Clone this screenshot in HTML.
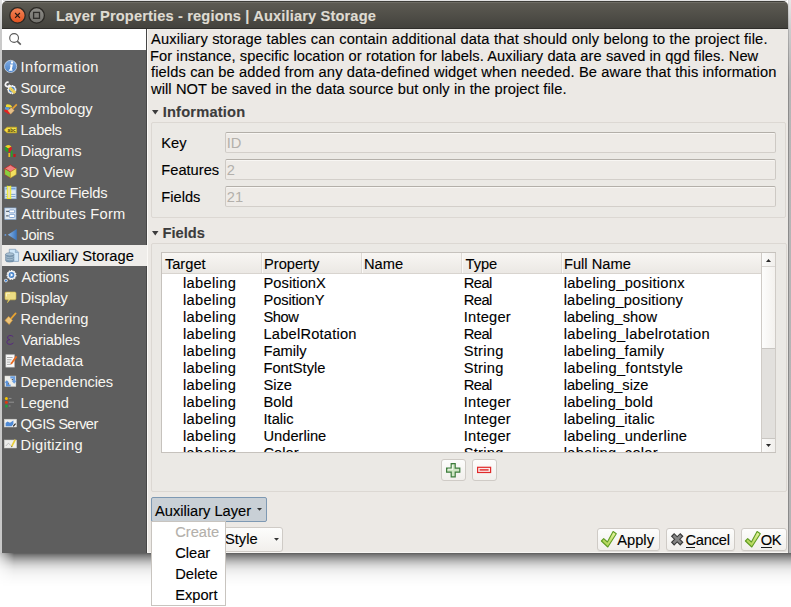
<!DOCTYPE html>
<html><head><meta charset="utf-8"><style>
html,body{margin:0;padding:0;width:791px;height:607px;overflow:hidden;background:#fff;position:relative}
.t{position:absolute;white-space:pre;font-family:"Liberation Sans",sans-serif;-webkit-text-stroke:0.12px currentColor}
.r{position:absolute}
svg.r{overflow:visible}
</style></head><body>
<div class="r" style="left:0;top:553px;width:791px;height:40px;-webkit-mask-image:linear-gradient(90deg,rgba(0,0,0,0.35) 0px,#000 14px);background:linear-gradient(rgba(0,0,0,0.64) 0px,rgba(0,0,0,0.52) 2px,rgba(0,0,0,0.40) 5px,rgba(0,0,0,0.25) 9px,rgba(0,0,0,0.145) 13px,rgba(0,0,0,0.08) 17px,rgba(0,0,0,0.04) 22px,rgba(0,0,0,0.016) 27px,rgba(0,0,0,0) 34px)"></div>
<div class="r" style="left:788px;top:0;width:1px;height:553px;background:linear-gradient(#dcdcdc,#b0b0b0 30px,#8c8c8c 80px,#8a8a8a)"></div>
<div class="r" style="left:789px;top:0;width:2px;height:553px;background:linear-gradient(#e8e8e8,#cccccc 30px,#b6b6b6 80px,#b4b4b4)"></div>
<div class="r" style="left:0;top:0;width:2px;height:553px;background:linear-gradient(#e4e4e4,#cacaca 30px,#c8c8c8)"></div>
<div class="r" style="left:3px;top:0px;width:784px;height:1px;background:#e2e2e2"></div>
<div class="r" style="left:2px;top:1px;width:786px;height:552px;border-radius:5px 5px 0 0;background:#ece9e5"></div>
<div class="r" style="left:147px;top:552px;width:641px;height:1px;background:#f7f5f2"></div>
<div class="r" style="left:2px;top:1px;width:786px;height:28px;border-radius:5px 5px 0 0;background:linear-gradient(#3e3d38 0px,#3e3d38 1px,#6e6c64 1px,#6e6c64 2px,#5c5a52 2px,#43423d 27px)"></div>
<div class="r" style="left:2px;top:28px;width:786px;height:1px;background:#2f2e2b"></div>
<svg class="r" style="left:0;top:0" width="50" height="30"><defs><linearGradient id="gCl" x1="0" y1="0" x2="0" y2="1"><stop offset="0" stop-color="#f3875a"/><stop offset="1" stop-color="#e0501e"/></linearGradient><linearGradient id="gMx" x1="0" y1="0" x2="0" y2="1"><stop offset="0" stop-color="#8f8e89"/><stop offset="1" stop-color="#72716c"/></linearGradient></defs><circle cx="17.5" cy="15.4" r="7.7" fill="url(#gCl)" stroke="#2a2824" stroke-width="1.3"/><path d="M15.1 13L19.9 17.8M19.9 13L15.1 17.8" stroke="#2a1a14" stroke-width="1.2"/><circle cx="36.7" cy="15.4" r="7.7" fill="url(#gMx)" stroke="#2a2824" stroke-width="1.3"/><rect x="33.6" y="12.4" width="5.9" height="5.9" fill="#7e7d78" stroke="#2e2d2a" stroke-width="1.3"/></svg>
<div class="t" style="left:56.00px;top:6.91px;font-size:14.67px;line-height:18px;color:#dfdbd2;font-weight:bold;letter-spacing:0.133px;">Layer Properties - regions | Auxiliary Storage</div>
<div class="r" style="left:2px;top:29px;width:144px;height:524px;background:#5e5e5e"></div>
<div class="r" style="left:146px;top:29px;width:1px;height:524px;background:#474747"></div>
<div class="r" style="left:147px;top:29px;width:1px;height:523px;background:#fbf9f6"></div>
<div class="r" style="left:2px;top:29px;width:144px;height:21px;background:#ffffff"></div>
<svg class="r" style="left:0;top:0" width="30" height="60"><circle cx="14.1" cy="38" r="4.4" fill="none" stroke="#5a5a5a" stroke-width="1.1"/><path d="M17.2 41.2L20.8 44.6" stroke="#5a5a5a" stroke-width="1.6"/></svg>
<div class="t" style="left:20.60px;top:57.91px;font-size:14.67px;line-height:18px;color:#f8f6f2;font-weight:normal;letter-spacing:0.450px;-webkit-text-stroke:0">Information</div>
<div class="t" style="left:20.60px;top:78.91px;font-size:14.67px;line-height:18px;color:#f8f6f2;font-weight:normal;letter-spacing:-0.300px;-webkit-text-stroke:0">Source</div>
<div class="t" style="left:20.60px;top:99.91px;font-size:14.67px;line-height:18px;color:#f8f6f2;font-weight:normal;letter-spacing:-0.062px;-webkit-text-stroke:0">Symbology</div>
<div class="t" style="left:20.60px;top:120.91px;font-size:14.67px;line-height:18px;color:#f8f6f2;font-weight:normal;letter-spacing:-0.380px;-webkit-text-stroke:0">Labels</div>
<div class="t" style="left:20.60px;top:141.91px;font-size:14.67px;line-height:18px;color:#f8f6f2;font-weight:normal;letter-spacing:-0.257px;-webkit-text-stroke:0">Diagrams</div>
<div class="t" style="left:20.60px;top:162.91px;font-size:14.67px;line-height:18px;color:#f8f6f2;font-weight:normal;letter-spacing:-0.150px;-webkit-text-stroke:0">3D View</div>
<div class="t" style="left:20.60px;top:183.91px;font-size:14.67px;line-height:18px;color:#f8f6f2;font-weight:normal;letter-spacing:-0.225px;-webkit-text-stroke:0">Source Fields</div>
<div class="t" style="left:21.60px;top:204.91px;font-size:14.67px;line-height:18px;color:#f8f6f2;font-weight:normal;letter-spacing:0.250px;-webkit-text-stroke:0">Attributes Form</div>
<div class="t" style="left:21.60px;top:225.91px;font-size:14.67px;line-height:18px;color:#f8f6f2;font-weight:normal;letter-spacing:-0.450px;-webkit-text-stroke:0">Joins</div>
<div class="r" style="left:2px;top:245px;width:145px;height:21px;background:#efedea"></div>
<div class="t" style="left:22.40px;top:246.91px;font-size:14.67px;line-height:18px;color:#000;font-weight:normal;letter-spacing:0.044px;">Auxiliary Storage</div>
<div class="t" style="left:21.60px;top:267.91px;font-size:14.67px;line-height:18px;color:#f8f6f2;font-weight:normal;letter-spacing:-0.117px;-webkit-text-stroke:0">Actions</div>
<div class="t" style="left:20.60px;top:288.91px;font-size:14.67px;line-height:18px;color:#f8f6f2;font-weight:normal;letter-spacing:-0.133px;-webkit-text-stroke:0">Display</div>
<div class="t" style="left:20.60px;top:309.91px;font-size:14.67px;line-height:18px;color:#f8f6f2;font-weight:normal;letter-spacing:0.037px;-webkit-text-stroke:0">Rendering</div>
<div class="t" style="left:21.60px;top:330.91px;font-size:14.67px;line-height:18px;color:#f8f6f2;font-weight:normal;letter-spacing:-0.188px;-webkit-text-stroke:0">Variables</div>
<div class="t" style="left:20.60px;top:351.91px;font-size:14.67px;line-height:18px;color:#f8f6f2;font-weight:normal;letter-spacing:0.214px;-webkit-text-stroke:0">Metadata</div>
<div class="t" style="left:20.60px;top:372.91px;font-size:14.67px;line-height:18px;color:#f8f6f2;font-weight:normal;letter-spacing:-0.100px;-webkit-text-stroke:0">Dependencies</div>
<div class="t" style="left:20.60px;top:393.91px;font-size:14.67px;line-height:18px;color:#f8f6f2;font-weight:normal;letter-spacing:-0.100px;-webkit-text-stroke:0">Legend</div>
<div class="t" style="left:20.60px;top:414.91px;font-size:14.67px;line-height:18px;color:#f8f6f2;font-weight:normal;letter-spacing:-0.620px;-webkit-text-stroke:0">QGIS Server</div>
<div class="t" style="left:20.60px;top:435.91px;font-size:14.67px;line-height:18px;color:#f8f6f2;font-weight:normal;letter-spacing:0.278px;-webkit-text-stroke:0">Digitizing</div>
<svg class="r" style="left:0;top:0" width="150" height="460" viewBox="0 0 150 460">
<defs>
<linearGradient id="gI" x1="0" y1="0" x2="0" y2="1"><stop offset="0" stop-color="#7eaae2"/><stop offset="1" stop-color="#4a82c8"/></linearGradient>
<linearGradient id="gChk" x1="0" y1="0" x2="1" y2="1"><stop offset="0" stop-color="#d8ec8a"/><stop offset="1" stop-color="#7fb52e"/></linearGradient>
</defs>
<!-- Information -->
<circle cx="10.6" cy="66.4" r="6.1" fill="url(#gI)" stroke="#c9d8ea" stroke-width="0.8"/>
<path d="M10.1 64.5L12.9 64.5L11.8 69.6L12.7 69.6L12.4 70.7L8.7 70.7L9.0 69.6L9.8 69.6L10.6 65.5L9.9 65.5Z" fill="#fff"/>
<circle cx="12.0" cy="62.5" r="1.15" fill="#fff"/>
<!-- Source: wrench + gear -->
<path d="M8.6 82.6A2.1 2.1 0 1 0 9.3 85.6L10.6 86.9" fill="none" stroke="#f4f4f4" stroke-width="1.7"/>
<circle cx="11.8" cy="89.6" r="4.0" fill="#f6f6f6" stroke="#f0f0f0" stroke-width="1.2" stroke-dasharray="1.4 0.9"/>
<circle cx="11.8" cy="89.6" r="2.9" fill="#4d8ad0"/>
<path d="M9.6 87.6L15.2 93" stroke="#f2d45c" stroke-width="3"/>
<path d="M10.8 90.2L12.2 88.8M12.2 91.6L13.6 90.2M13.6 93L15 91.6" stroke="#c9a838" stroke-width="0.5"/>
<!-- Symbology: brush -->
<path d="M6.4 104.4Q8 103.8 10.2 104.8L12.2 106.4L10.8 107.6L6.2 107.2Q5.4 105.4 6.4 104.4Z" fill="#f2dc30"/>
<path d="M5.2 107.1L9.4 107.5L8.6 110.2L4.8 109.6Z" fill="#5a9ce0"/>
<path d="M4.2 109.6L8.6 110.2L10.6 113.2L9.2 114.4L4.4 111.6Z" fill="#e42222"/>
<path d="M7.8 110.4L11.4 107.6L14.2 110.6L10.6 114.2Z" fill="#e6c088" stroke="#d9a050" stroke-width="0.4"/>
<path d="M12.6 108.6L16.8 104.4" stroke="#e6a030" stroke-width="1.7"/>
<!-- Labels: tag -->
<path d="M4.2 130L7 127.2H16.6V132.8H7Z" fill="#f4e04a" stroke="#c9a818" stroke-width="0.7"/>
<text x="7.6" y="131.7" font-family="Liberation Sans" font-size="4.6" font-weight="bold" fill="#4a3a08" textLength="8" lengthAdjust="spacingAndGlyphs">abc</text>
<!-- Diagrams -->
<path d="M8.3 148.6L5.18 146.8A3.6 3.6 0 0 1 11.42 146.8Z" fill="#f2d320"/>
<path d="M8.3 148.6L11.42 146.8A3.6 3.6 0 0 1 8.3 152.2Z" fill="#d82020"/>
<path d="M8.3 148.6L8.3 152.2A3.6 3.6 0 0 1 5.18 146.8Z" fill="#2aa02a"/>
<rect x="8.4" y="153" width="1.7" height="4" fill="#f0c020"/>
<rect x="11" y="150.5" width="1.6" height="6.5" fill="#2aa02a"/>
<rect x="13.4" y="154" width="2.2" height="3" fill="#c81818"/>
<!-- 3D View: cube -->
<path d="M10.4 165L16.2 168.5L10.4 172L4.6 168.5Z" fill="#f08080" stroke="#c02020" stroke-width="0.7"/>
<path d="M4.6 168.5L10.4 172V178L4.6 174.5Z" fill="#8ad040" stroke="#c02020" stroke-width="0.5"/>
<path d="M16.2 168.5L10.4 172V178L16.2 174.5Z" fill="#f2e060" stroke="#c0a020" stroke-width="0.5"/>
<!-- Source Fields -->
<rect x="4.9" y="187" width="11.2" height="11.7" fill="#e2eaf3" stroke="#94b8e2" stroke-width="0.7"/>
<rect x="4.9" y="187" width="11.2" height="3.2" fill="#a9cbef"/>
<path d="M5.6 188.6H15.4M5.6 194.4H15.4M5.6 196.6H15.4" stroke="#5f90cc" stroke-width="0.8"/>
<rect x="7.3" y="186.1" width="3.4" height="12.4" fill="#ebe2a8" stroke="#f0ea28" stroke-width="1"/>
<path d="M7.4 185.3H10.5" stroke="#2a3a6a" stroke-width="0.6"/>
<!-- Attributes Form -->
<rect x="4.8" y="208" width="11.2" height="11.3" fill="#e4eaf0" stroke="#8db2de" stroke-width="0.7"/>
<rect x="9.3" y="209.9" width="5.4" height="2.9" rx="0.8" fill="#fff" stroke="#6a94cc" stroke-width="0.8"/>
<rect x="9.3" y="214.4" width="5.4" height="3.1" rx="0.8" fill="#fff" stroke="#6a94cc" stroke-width="0.8"/>
<path d="M6.1 211.3H9M6.1 215.9H8.6" stroke="#3a4a5a" stroke-width="1"/>
<!-- Joins -->
<defs><linearGradient id="gJ" x1="0" y1="0" x2="1" y2="0"><stop offset="0" stop-color="#8ab8ec"/><stop offset="1" stop-color="#3a74bc"/></linearGradient></defs>
<path d="M16.8 229V240.6L7.8 234.8Z" fill="url(#gJ)"/>
<circle cx="5.4" cy="234.9" r="0.9" fill="#6a9ee0"/>
<!-- Auxiliary Storage -->
<path d="M9.3 249.3H15.6L18.6 252.3V261.4H9.3Z" fill="#cfe6f8" stroke="#7896b4" stroke-width="0.7"/>
<path d="M15.4 249.5V252.5H18.4" fill="#a8c4dc" stroke="#7896b4" stroke-width="0.5"/>
<path d="M5.6 254.3V260.5A4.15 1.6 0 0 0 13.9 260.5V254.3Z" fill="#7e9bb2" stroke="#5a7690" stroke-width="0.5"/>
<ellipse cx="9.75" cy="254.3" rx="4.15" ry="1.6" fill="#a9c0d2" stroke="#5a7690" stroke-width="0.5"/>
<path d="M5.8 256.6A4.15 1.6 0 0 0 13.7 256.6M5.8 258.6A4.15 1.6 0 0 0 13.7 258.6" fill="none" stroke="#bccfdd" stroke-width="0.6"/>
<!-- Actions -->
<circle cx="11.5" cy="275" r="4.3" fill="#fafafa" stroke="#f2f2f2" stroke-width="1.4" stroke-dasharray="1.5 0.9"/>
<circle cx="11.5" cy="275" r="2.9" fill="#4b86cc"/>
<path d="M10.6 273.2V276.8L13.3 275Z" fill="#fff"/>
<circle cx="5.9" cy="280.6" r="1.8" fill="#e8e8e8"/>
<circle cx="5.9" cy="280.6" r="1.1" fill="#3f7fcf"/>
<!-- Display: speech bubble -->
<path d="M6.2 292H14.8Q16 292 16 293.2V298.6Q16 299.8 14.8 299.8H10L7.4 302.8L8.4 299.8H6.2Q5 299.8 5 298.6V293.2Q5 292 6.2 292Z" fill="#ecdc84" stroke="#d2b848" stroke-width="0.6"/>
<path d="M6.4 296.5V293.8Q6.4 293.2 7 293.2H10" fill="none" stroke="#fffbe0" stroke-width="0.8"/>
<!-- Rendering: brush -->
<path d="M11 318.6L15.6 313.4" stroke="#e6a232" stroke-width="1.8" stroke-linecap="round"/>
<path d="M5 320.4L8.6 316.6L12.4 320.2L9.2 324.4Z" fill="#ecc47c" stroke="#dc9e34" stroke-width="0.7"/>
<!-- Variables: epsilon -->
<path d="M13.2 336.6Q11.5 335 9.2 335.6Q6.8 336.4 7.8 338.6Q8.4 339.5 10 339.6Q6.6 339.8 6.8 342.2Q7.2 344.6 10.2 344.4Q12.3 344.2 13.4 342.8" fill="none" stroke="#57297f" stroke-width="1.0"/>
<!-- Metadata -->
<path d="M5.8 354.6H14.5V367.2H5.8Z" fill="#fafafa" stroke="#bbb" stroke-width="0.5"/>
<path d="M7 357.5H12.5M7 359.8H11.5M7 362.1H10.5M7 364.4H11" stroke="#777" stroke-width="0.6"/>
<path d="M11 364L16.6 356.4" stroke="#e86a20" stroke-width="1.8"/>
<!-- Dependencies -->
<rect x="4.8" y="375.9" width="11.2" height="10.9" fill="#eeeeea" stroke="#9a9a96" stroke-width="0.4"/>
<path d="M6.8 380.2L9.3 382.8H8V384.6H10.6V386.6H5.8V382.8H4.3Z" fill="#5b93dc"/>
<path d="M10.3 376.2H15.2V380.8H16.6L14.2 383.8L11.6 380.8H12.9V378.6H10.3Z" fill="#6a9ee0"/>
<circle cx="8.6" cy="383.8" r="0.6" fill="#222"/>
<circle cx="12.3" cy="379.6" r="0.6" fill="#222"/>
<!-- Legend -->
<circle cx="6.4" cy="398.4" r="1.5" fill="#f6c400"/>
<circle cx="6.4" cy="402.2" r="1.5" fill="#e03a10"/>
<circle cx="6.4" cy="406" r="1.5" fill="#20a040"/>
<path d="M8.8 398.4H11.5M8.8 402.2H14M8.8 406H10.5" stroke="#a0a0a0" stroke-width="0.8"/>
<!-- QGIS Server -->
<rect x="4.3" y="419.2" width="12.3" height="7.8" fill="#f0f0ee" stroke="#cfcfcc" stroke-width="0.5"/>
<path d="M5.6 426.2V423L7.5 421.5L10 422.8L13.4 420.6V424.2L11.5 426.2Z" fill="#4f8ad6"/>
<path d="M13.2 426.4L15.6 423.6" stroke="#222" stroke-width="1.1"/>
<!-- Digitizing -->
<rect x="4.3" y="440" width="12.3" height="8" fill="#eeeeec" stroke="#cfcfcc" stroke-width="0.5"/>
<path d="M5.8 446L8.4 443.2L10.8 445.4" fill="none" stroke="#9a9a9a" stroke-width="0.6"/>
<path d="M11.6 446.6L15.2 439.6" stroke="#e6cc3a" stroke-width="1.7"/>
<path d="M11.3 447.2L11.9 446" stroke="#555" stroke-width="0.8"/>
</svg>

<div class="t" style="left:151.00px;top:30.21px;font-size:14.67px;line-height:18px;color:#000;font-weight:normal;letter-spacing:0.167px;">Auxiliary storage tables can contain additional data that should only belong to the project file.</div>
<div class="t" style="left:150.00px;top:46.81px;font-size:14.67px;line-height:18px;color:#000;font-weight:normal;letter-spacing:0.072px;">For instance, specific location or rotation for labels. Auxiliary data are saved in qgd files. New</div>
<div class="t" style="left:151.00px;top:63.41px;font-size:14.67px;line-height:18px;color:#000;font-weight:normal;letter-spacing:0.121px;">fields can be added from any data-defined widget when needed. Be aware that this information</div>
<div class="t" style="left:151.00px;top:80.01px;font-size:14.67px;line-height:18px;color:#000;font-weight:normal;letter-spacing:0.092px;">will NOT be saved in the data source but only in the project file.</div>
<svg class="r" style="left:152px;top:110px" width="7" height="5"><path d="M0 0H6.5L3.25 4.5Z" fill="#3c3c3c"/></svg>
<div class="t" style="left:162.70px;top:103.31px;font-size:14.67px;line-height:18px;color:#3c3c3c;font-weight:bold;letter-spacing:0.190px;">Information</div>
<div class="r" style="left:151px;top:122px;width:635px;height:96px;border:1px solid #dcd8d3;border-radius:2px;background:#ebe9e5;box-sizing:border-box"></div>
<div class="t" style="left:161.30px;top:133.71px;font-size:14.67px;line-height:18px;color:#000;font-weight:normal;letter-spacing:0.000px;">Key</div>
<div class="r" style="left:225px;top:132px;width:551px;height:21px;border:1px solid #cdc9c4;border-top-color:#b3afa9;border-bottom-color:#d3cfca;border-radius:2px;background:#eeebe7;box-sizing:border-box;box-shadow:inset 0 1px 0 #f8f6f3"></div>
<div class="t" style="left:226.80px;top:134.01px;font-size:14.67px;line-height:18px;color:#b3b0ab;font-weight:normal;letter-spacing:0.000px;-webkit-text-stroke:0">ID</div>
<div class="t" style="left:161.30px;top:160.71px;font-size:14.67px;line-height:18px;color:#000;font-weight:normal;letter-spacing:0.000px;">Features</div>
<div class="r" style="left:225px;top:159px;width:551px;height:21px;border:1px solid #cdc9c4;border-top-color:#b3afa9;border-bottom-color:#d3cfca;border-radius:2px;background:#eeebe7;box-sizing:border-box;box-shadow:inset 0 1px 0 #f8f6f3"></div>
<div class="t" style="left:226.80px;top:161.01px;font-size:14.67px;line-height:18px;color:#b3b0ab;font-weight:normal;letter-spacing:0.000px;-webkit-text-stroke:0">2</div>
<div class="t" style="left:161.30px;top:187.71px;font-size:14.67px;line-height:18px;color:#000;font-weight:normal;letter-spacing:0.000px;">Fields</div>
<div class="r" style="left:225px;top:186px;width:551px;height:21px;border:1px solid #cdc9c4;border-top-color:#b3afa9;border-bottom-color:#d3cfca;border-radius:2px;background:#eeebe7;box-sizing:border-box;box-shadow:inset 0 1px 0 #f8f6f3"></div>
<div class="t" style="left:226.80px;top:188.01px;font-size:14.67px;line-height:18px;color:#b3b0ab;font-weight:normal;letter-spacing:0.000px;-webkit-text-stroke:0">21</div>
<svg class="r" style="left:152px;top:231px" width="7" height="5"><path d="M0 0H6.5L3.25 4.5Z" fill="#3c3c3c"/></svg>
<div class="t" style="left:162.50px;top:223.91px;font-size:14.67px;line-height:18px;color:#3c3c3c;font-weight:bold;letter-spacing:0.000px;">Fields</div>
<div class="r" style="left:151px;top:243px;width:636px;height:249px;border:1px solid #dcd8d3;border-radius:2px;background:#ebe9e5;box-sizing:border-box"></div>
<div class="r" style="left:161px;top:252px;width:615px;height:201px;background:#fff;border:1px solid #c6c2bd;box-sizing:border-box"></div>
<div class="r" style="left:162px;top:253px;width:600px;height:21px;background:linear-gradient(#f8f6f3,#ebe8e4);border-bottom:1px solid #d8d4cf;box-sizing:border-box"></div>
<div class="r" style="left:261px;top:253px;width:1px;height:20px;background:#dedad5"></div>
<div class="r" style="left:262px;top:253px;width:1px;height:20px;background:#faf8f6"></div>
<div class="r" style="left:361px;top:253px;width:1px;height:20px;background:#dedad5"></div>
<div class="r" style="left:362px;top:253px;width:1px;height:20px;background:#faf8f6"></div>
<div class="r" style="left:461px;top:253px;width:1px;height:20px;background:#dedad5"></div>
<div class="r" style="left:462px;top:253px;width:1px;height:20px;background:#faf8f6"></div>
<div class="r" style="left:561px;top:253px;width:1px;height:20px;background:#dedad5"></div>
<div class="r" style="left:562px;top:253px;width:1px;height:20px;background:#faf8f6"></div>
<div class="t" style="left:164.90px;top:255.41px;font-size:14.67px;line-height:18px;color:#000;font-weight:normal;letter-spacing:0.000px;">Target</div>
<div class="t" style="left:264.00px;top:255.41px;font-size:14.67px;line-height:18px;color:#000;font-weight:normal;letter-spacing:0.000px;">Property</div>
<div class="t" style="left:364.00px;top:255.41px;font-size:14.67px;line-height:18px;color:#000;font-weight:normal;letter-spacing:0.000px;">Name</div>
<div class="t" style="left:465.50px;top:255.41px;font-size:14.67px;line-height:18px;color:#000;font-weight:normal;letter-spacing:0.000px;">Type</div>
<div class="t" style="left:564.00px;top:255.41px;font-size:14.67px;line-height:18px;color:#000;font-weight:normal;letter-spacing:0.000px;">Full Name</div>
<div class="r" style="left:162px;top:273px;width:600px;height:179px;overflow:hidden">
<div class="t" style="left:21.00px;top:1.11px;font-size:14.67px;line-height:18px;color:#000;font-weight:normal;letter-spacing:0.329px;">labeling</div>
<div class="t" style="left:101.50px;top:1.11px;font-size:14.67px;line-height:18px;color:#000;font-weight:normal;letter-spacing:0.050px;">PositionX</div>
<div class="t" style="left:301.70px;top:1.11px;font-size:14.67px;line-height:18px;color:#000;font-weight:normal;letter-spacing:-0.500px;">Real</div>
<div class="t" style="left:401.70px;top:1.11px;font-size:14.67px;line-height:18px;color:#000;font-weight:normal;letter-spacing:0.253px;">labeling_positionx</div>
<div class="t" style="left:21.00px;top:18.11px;font-size:14.67px;line-height:18px;color:#000;font-weight:normal;letter-spacing:0.329px;">labeling</div>
<div class="t" style="left:101.50px;top:18.11px;font-size:14.67px;line-height:18px;color:#000;font-weight:normal;letter-spacing:-0.125px;">PositionY</div>
<div class="t" style="left:301.70px;top:18.11px;font-size:14.67px;line-height:18px;color:#000;font-weight:normal;letter-spacing:-0.500px;">Real</div>
<div class="t" style="left:401.70px;top:18.11px;font-size:14.67px;line-height:18px;color:#000;font-weight:normal;letter-spacing:0.159px;">labeling_positiony</div>
<div class="t" style="left:21.00px;top:35.11px;font-size:14.67px;line-height:18px;color:#000;font-weight:normal;letter-spacing:0.329px;">labeling</div>
<div class="t" style="left:101.50px;top:35.11px;font-size:14.67px;line-height:18px;color:#000;font-weight:normal;letter-spacing:-0.467px;">Show</div>
<div class="t" style="left:301.70px;top:35.11px;font-size:14.67px;line-height:18px;color:#000;font-weight:normal;letter-spacing:0.233px;">Integer</div>
<div class="t" style="left:401.70px;top:35.11px;font-size:14.67px;line-height:18px;color:#000;font-weight:normal;letter-spacing:0.033px;">labeling_show</div>
<div class="t" style="left:21.00px;top:52.11px;font-size:14.67px;line-height:18px;color:#000;font-weight:normal;letter-spacing:0.329px;">labeling</div>
<div class="t" style="left:101.50px;top:52.11px;font-size:14.67px;line-height:18px;color:#000;font-weight:normal;letter-spacing:0.208px;">LabelRotation</div>
<div class="t" style="left:301.70px;top:52.11px;font-size:14.67px;line-height:18px;color:#000;font-weight:normal;letter-spacing:-0.500px;">Real</div>
<div class="t" style="left:401.70px;top:52.11px;font-size:14.67px;line-height:18px;color:#000;font-weight:normal;letter-spacing:0.352px;">labeling_labelrotation</div>
<div class="t" style="left:21.00px;top:69.11px;font-size:14.67px;line-height:18px;color:#000;font-weight:normal;letter-spacing:0.329px;">labeling</div>
<div class="t" style="left:101.50px;top:69.11px;font-size:14.67px;line-height:18px;color:#000;font-weight:normal;letter-spacing:0.000px;">Family</div>
<div class="t" style="left:301.70px;top:69.11px;font-size:14.67px;line-height:18px;color:#000;font-weight:normal;letter-spacing:0.280px;">String</div>
<div class="t" style="left:401.70px;top:69.11px;font-size:14.67px;line-height:18px;color:#000;font-weight:normal;letter-spacing:0.250px;">labeling_family</div>
<div class="t" style="left:21.00px;top:86.11px;font-size:14.67px;line-height:18px;color:#000;font-weight:normal;letter-spacing:0.329px;">labeling</div>
<div class="t" style="left:101.50px;top:86.11px;font-size:14.67px;line-height:18px;color:#000;font-weight:normal;letter-spacing:0.000px;">FontStyle</div>
<div class="t" style="left:301.70px;top:86.11px;font-size:14.67px;line-height:18px;color:#000;font-weight:normal;letter-spacing:0.280px;">String</div>
<div class="t" style="left:401.70px;top:86.11px;font-size:14.67px;line-height:18px;color:#000;font-weight:normal;letter-spacing:0.353px;">labeling_fontstyle</div>
<div class="t" style="left:21.00px;top:103.11px;font-size:14.67px;line-height:18px;color:#000;font-weight:normal;letter-spacing:0.329px;">labeling</div>
<div class="t" style="left:101.50px;top:103.11px;font-size:14.67px;line-height:18px;color:#000;font-weight:normal;letter-spacing:0.000px;">Size</div>
<div class="t" style="left:301.70px;top:103.11px;font-size:14.67px;line-height:18px;color:#000;font-weight:normal;letter-spacing:-0.500px;">Real</div>
<div class="t" style="left:401.70px;top:103.11px;font-size:14.67px;line-height:18px;color:#000;font-weight:normal;letter-spacing:0.000px;">labeling_size</div>
<div class="t" style="left:21.00px;top:120.11px;font-size:14.67px;line-height:18px;color:#000;font-weight:normal;letter-spacing:0.329px;">labeling</div>
<div class="t" style="left:101.50px;top:120.11px;font-size:14.67px;line-height:18px;color:#000;font-weight:normal;letter-spacing:0.000px;">Bold</div>
<div class="t" style="left:301.70px;top:120.11px;font-size:14.67px;line-height:18px;color:#000;font-weight:normal;letter-spacing:0.233px;">Integer</div>
<div class="t" style="left:401.70px;top:120.11px;font-size:14.67px;line-height:18px;color:#000;font-weight:normal;letter-spacing:0.233px;">labeling_bold</div>
<div class="t" style="left:21.00px;top:137.11px;font-size:14.67px;line-height:18px;color:#000;font-weight:normal;letter-spacing:0.329px;">labeling</div>
<div class="t" style="left:101.50px;top:137.11px;font-size:14.67px;line-height:18px;color:#000;font-weight:normal;letter-spacing:0.000px;">Italic</div>
<div class="t" style="left:301.70px;top:137.11px;font-size:14.67px;line-height:18px;color:#000;font-weight:normal;letter-spacing:0.233px;">Integer</div>
<div class="t" style="left:401.70px;top:137.11px;font-size:14.67px;line-height:18px;color:#000;font-weight:normal;letter-spacing:0.214px;">labeling_italic</div>
<div class="t" style="left:21.00px;top:154.11px;font-size:14.67px;line-height:18px;color:#000;font-weight:normal;letter-spacing:0.329px;">labeling</div>
<div class="t" style="left:101.50px;top:154.11px;font-size:14.67px;line-height:18px;color:#000;font-weight:normal;letter-spacing:0.000px;">Underline</div>
<div class="t" style="left:301.70px;top:154.11px;font-size:14.67px;line-height:18px;color:#000;font-weight:normal;letter-spacing:0.233px;">Integer</div>
<div class="t" style="left:401.70px;top:154.11px;font-size:14.67px;line-height:18px;color:#000;font-weight:normal;letter-spacing:0.253px;">labeling_underline</div>
<div class="t" style="left:21.00px;top:171.11px;font-size:14.67px;line-height:18px;color:#000;font-weight:normal;letter-spacing:0.329px;">labeling</div>
<div class="t" style="left:101.50px;top:171.11px;font-size:14.67px;line-height:18px;color:#000;font-weight:normal;letter-spacing:0.000px;">Color</div>
<div class="t" style="left:301.70px;top:171.11px;font-size:14.67px;line-height:18px;color:#000;font-weight:normal;letter-spacing:0.280px;">String</div>
<div class="t" style="left:401.70px;top:171.11px;font-size:14.67px;line-height:18px;color:#000;font-weight:normal;letter-spacing:0.269px;">labeling_color</div>
</div>
<div class="r" style="left:761px;top:253px;width:15px;height:199px;background:#e2e0dd;border-left:1px solid #cfcbc6;border-right:1px solid #cfcbc6;box-sizing:border-box"></div>
<div class="r" style="left:762px;top:253px;width:13px;height:13px;background:linear-gradient(90deg,#fbfbfa,#f1efec)"></div>
<div class="r" style="left:762px;top:266px;width:13px;height:1px;background:#dad7d3"></div>
<div class="r" style="left:762px;top:267px;width:13px;height:81px;background:linear-gradient(90deg,#fdfdfc,#f3f1ee)"></div>
<div class="r" style="left:762px;top:348px;width:13px;height:1px;background:#c9c6c2"></div>
<svg class="r" style="left:766px;top:258.5px" width="6" height="4"><path d="M0 3H5L2.5 0Z" fill="#2a2a2a"/></svg>
<div class="r" style="left:762px;top:438px;width:13px;height:1px;background:#c9c6c2"></div>
<div class="r" style="left:762px;top:439px;width:13px;height:13px;background:linear-gradient(90deg,#fbfbfa,#f1efec)"></div>
<svg class="r" style="left:766px;top:443.8px" width="6" height="4"><path d="M0 0H5L2.5 3Z" fill="#2a2a2a"/></svg>
<div class="r" style="left:441px;top:459px;width:25px;height:22px;background:linear-gradient(#fdfdfc,#f1efec);border:1px solid #cfcbc6;border-radius:3px;box-sizing:border-box"></div>
<div class="r" style="left:472px;top:459px;width:25px;height:22px;background:linear-gradient(#fdfdfc,#f1efec);border:1px solid #cfcbc6;border-radius:3px;box-sizing:border-box"></div>
<svg class="r" style="left:0;top:0" width="500" height="490"><path d="M451.2 463.6H455.2V468.2H459.8V472.2H455.2V476.8H451.2V472.2H446.6V468.2H451.2Z" fill="#cfe6c4" stroke="#3c7c3c" stroke-width="1.2"/><path d="M452.4 465V470.2M448 469.2H452.6" stroke="#f4fbf0" stroke-width="0.9"/><rect x="477.6" y="467.3" width="13" height="5.2" fill="#fbeaea" stroke="#e02a2a" stroke-width="1.2"/><rect x="479.6" y="469.2" width="9" height="1.4" fill="#e02a2a"/></svg>
<div class="r" style="left:151px;top:497px;width:116px;height:25px;background:#c9d0d6;border:1px solid #7e99b3;border-radius:2px;box-sizing:border-box"></div>
<div class="t" style="left:155.00px;top:501.51px;font-size:14.67px;line-height:18px;color:#000;font-weight:normal;letter-spacing:0.000px;">Auxiliary Layer</div>
<svg class="r" style="left:257px;top:508px" width="6" height="4"><path d="M0 0H5L2.5 2.8Z" fill="#333"/></svg>
<div class="r" style="left:200px;top:527px;width:83px;height:25px;background:linear-gradient(#fdfdfc,#f1efec);border:1px solid #cfcbc6;border-radius:3px;box-sizing:border-box"></div>
<div class="t" style="left:225.00px;top:530.31px;font-size:14.67px;line-height:18px;color:#000;font-weight:normal;letter-spacing:0.000px;">Style</div>
<svg class="r" style="left:274px;top:537.6px" width="6" height="4"><path d="M0 0H5L2.5 2.8Z" fill="#333"/></svg>
<div class="r" style="left:597px;top:528px;width:63px;height:23px;background:linear-gradient(#fdfdfc,#f1efec);border:1px solid #cfcbc6;border-radius:3px;box-sizing:border-box;box-shadow:0 1px 0 rgba(0,0,0,0.04)"></div>
<div class="r" style="left:666px;top:528px;width:69px;height:23px;background:linear-gradient(#fdfdfc,#f1efec);border:1px solid #cfcbc6;border-radius:3px;box-sizing:border-box;box-shadow:0 1px 0 rgba(0,0,0,0.04)"></div>
<div class="r" style="left:741px;top:528px;width:46px;height:23px;background:linear-gradient(#fdfdfc,#f1efec);border:1px solid #cfcbc6;border-radius:3px;box-sizing:border-box;box-shadow:0 1px 0 rgba(0,0,0,0.04)"></div>
<div class="t" style="left:617.30px;top:530.81px;font-size:14.67px;line-height:18px;color:#000;font-weight:normal;letter-spacing:0.000px;">Apply</div>
<div class="t" style="left:685.50px;top:530.81px;font-size:14.67px;line-height:18px;color:#000;font-weight:normal;letter-spacing:-0.240px;">Cancel</div>
<div class="t" style="left:760.80px;top:531.01px;font-size:14.67px;line-height:18px;color:#000;font-weight:normal;letter-spacing:-0.400px;">OK</div>
<div class="r" style="left:686px;top:547px;width:9px;height:1px;background:#1a1a1a"></div>
<div class="r" style="left:761px;top:547px;width:11px;height:1px;background:#1a1a1a"></div>
<svg class="r" style="left:600px;top:530px" width="18" height="18"><defs><linearGradient id="gChk2" x1="1" y1="0" x2="0" y2="1"><stop offset="0" stop-color="#e8f6a4"/><stop offset="1" stop-color="#a2cc44"/></linearGradient></defs><path d="M1.4 11L3.7 8.7L7.4 12L13.1 1.5L16.3 3.7L7.8 17Z" fill="url(#gChk2)" stroke="#5f9c22" stroke-width="1.1" stroke-linejoin="round"/></svg>
<svg class="r" style="left:744px;top:530px" width="18" height="18"><path d="M1.4 11L3.7 8.7L7.4 12L13.1 1.5L16.3 3.7L7.8 17Z" fill="url(#gChk2)" stroke="#5f9c22" stroke-width="1.1" stroke-linejoin="round"/></svg>
<svg class="r" style="left:0;top:0" width="700" height="560"><path d="M672.5 534.6L681.9 544M681.9 534.6L672.5 544" stroke="#3a3a3a" stroke-width="4.6"/><path d="M673.4 535.5L681 543.1M681 535.5L673.4 543.1" stroke="#858585" stroke-width="2.6"/></svg>
<div class="r" style="left:151px;top:521px;width:75px;height:85px;background:#fff;border:1px solid #c8c4bf;box-sizing:border-box"></div>
<div class="t" style="left:175.20px;top:522.91px;font-size:14.67px;line-height:18px;color:#b3b0ab;font-weight:normal;letter-spacing:0.000px;">Create</div>
<div class="t" style="left:175.20px;top:543.71px;font-size:14.67px;line-height:18px;color:#000;font-weight:normal;letter-spacing:0.000px;">Clear</div>
<div class="t" style="left:175.20px;top:565.11px;font-size:14.67px;line-height:18px;color:#000;font-weight:normal;letter-spacing:0.000px;">Delete</div>
<div class="t" style="left:175.20px;top:585.61px;font-size:14.67px;line-height:18px;color:#000;font-weight:normal;letter-spacing:0.000px;">Export</div>
</body></html>
